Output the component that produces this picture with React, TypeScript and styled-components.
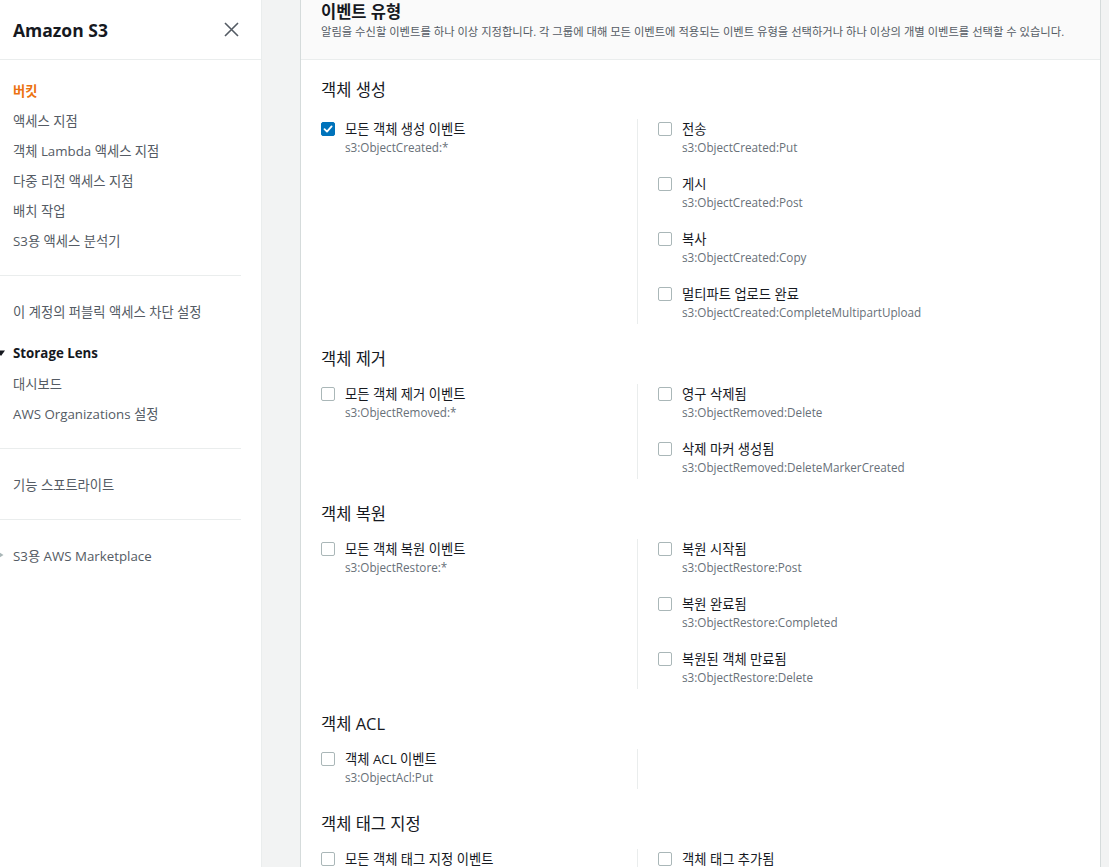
import React from 'react';
import styled, { createGlobalStyle } from 'styled-components';

const GlobalStyle = createGlobalStyle`
    html, body {
        margin: 0;
        padding: 0;
        height: 867px;
        overflow: hidden;
    }
    body {
        font-family: "Open Sans", "Noto Sans CJK KR", sans-serif;
        color: #16191f;
        background: #f2f3f3;
    }
`

const Layout = styled.div`
    display: flex;
    height: 867px;
`

const Sidebar = styled.nav`
    width: 261px;
    flex-shrink: 0;
    background: #ffffff;
    border-right: 1px solid #eaeded;
`

const SideHeader = styled.div`
    height: 59px;
    display: flex;
    align-items: center;
    justify-content: space-between;
    padding: 0 22px 0 13px;
    border-bottom: 1px solid #eaeded;
`

const SideTitle = styled.span`
    font-size: 17.5px;
    font-weight: 700;
    color: #16191f;
`

const NavList = styled.div`
    padding-top: 15px;
`

const NavGroup = styled.div<{ spaced?: boolean }>`
    margin-top: ${({ spaced }) => (spaced ? 12 : 0)}px;
`

const NavItem = styled.div<{ active?: boolean; bold?: boolean }>`
    display: flex;
    align-items: center;
    height: 30px;
    padding-left: 13px;
    font-size: 13.3px;
    color: ${({ active, bold }) => (active ? '#ec7211' : bold ? '#16191f' : '#545b64')};
    font-weight: ${({ active, bold }) => (active || bold ? 700 : 400)};
    white-space: nowrap;
`

const Caret = styled.svg`
    width: 8px;
    height: 8px;
    margin-left: -16px;
    margin-right: 8px;
    flex-shrink: 0;
`

const SideDivider = styled.hr`
    margin: 20px 20px 20px 0;
    border: 0;
    border-top: 1px solid #eaeded;
`

const Main = styled.main`
    flex: 1;
    padding: 0 8px 0 38px;
    min-width: 0;
`

const Panel = styled.section`
    height: 100%;
    background: #ffffff;
    border-left: 1px solid #d5dbdb;
    border-right: 1px solid #d5dbdb;
`

const PanelHeader = styled.header`
    background: #fafafa;
    padding: 1px 20px 19px;
    border-bottom: 1px solid #eaeded;
`

const PanelTitle = styled.h2`
    margin: 0;
    font-size: 16.5px;
    line-height: 22px;
    font-weight: 700;
    color: #16191f;
`

const PanelDesc = styled.p`
    margin: 1px 0 0;
    font-size: 11.3px;
    line-height: 16px;
    color: #545b64;
    white-space: nowrap;
`

const PanelBody = styled.div`
    padding: 19px 20px 0;
`

const GroupTitle = styled.h3`
    margin: 0;
    font-size: 16.5px;
    line-height: 22px;
    font-weight: 400;
    color: #16191f;
`

const Columns = styled.div<{ first?: boolean }>`
    display: grid;
    grid-template-columns: 317px 1fr;
    margin: ${({ first }) => (first ? 18 : 14)}px 0 24px;
`

const Column = styled.div<{ divided?: boolean }>`
    display: flex;
    flex-direction: column;
    gap: 19px;
    padding-bottom: 4px;
    padding-left: ${({ divided }) => (divided ? 0 : 20)}px;
    border-right: ${({ divided }) => (divided ? '1px solid #eaeded' : 'none')};
`

const Option = styled.label`
    display: flex;
    gap: 10px;
    align-items: flex-start;
`

const Box = styled.span<{ checked?: boolean }>`
    width: 14px;
    height: 14px;
    margin-top: 3px;
    box-sizing: border-box;
    flex-shrink: 0;
    border-radius: 2px;
    border: 1px solid ${({ checked }) => (checked ? '#0073bb' : '#aab7b8')};
    background: ${({ checked }) => (checked ? '#0073bb' : '#ffffff')};
    display: flex;
    align-items: center;
    justify-content: center;
`

const OptionText = styled.div`
    display: flex;
    flex-direction: column;
`

const OptionLabel = styled.span`
    font-size: 13.3px;
    line-height: 20px;
    color: #16191f;
    white-space: nowrap;
`

const OptionCode = styled.span`
    font-size: 11.7px;
    line-height: 16px;
    color: #687078;
    white-space: nowrap;
`

interface EventOption {
    label: string;
    code: string;
    checked?: boolean;
}

interface EventGroup {
    title: string;
    all: EventOption;
    items: EventOption[];
}

const groups: EventGroup[] = [
    {
        title: '객체 생성',
        all: { label: '모든 객체 생성 이벤트', code: 's3:ObjectCreated:*', checked: true },
        items: [
            { label: '전송', code: 's3:ObjectCreated:Put' },
            { label: '게시', code: 's3:ObjectCreated:Post' },
            { label: '복사', code: 's3:ObjectCreated:Copy' },
            { label: '멀티파트 업로드 완료', code: 's3:ObjectCreated:CompleteMultipartUpload' },
        ],
    },
    {
        title: '객체 제거',
        all: { label: '모든 객체 제거 이벤트', code: 's3:ObjectRemoved:*' },
        items: [
            { label: '영구 삭제됨', code: 's3:ObjectRemoved:Delete' },
            { label: '삭제 마커 생성됨', code: 's3:ObjectRemoved:DeleteMarkerCreated' },
        ],
    },
    {
        title: '객체 복원',
        all: { label: '모든 객체 복원 이벤트', code: 's3:ObjectRestore:*' },
        items: [
            { label: '복원 시작됨', code: 's3:ObjectRestore:Post' },
            { label: '복원 완료됨', code: 's3:ObjectRestore:Completed' },
            { label: '복원된 객체 만료됨', code: 's3:ObjectRestore:Delete' },
        ],
    },
    {
        title: '객체 ACL',
        all: { label: '객체 ACL 이벤트', code: 's3:ObjectAcl:Put' },
        items: [],
    },
    {
        title: '객체 태그 지정',
        all: { label: '모든 객체 태그 지정 이벤트', code: 's3:ObjectTagging:*' },
        items: [
            { label: '객체 태그 추가됨', code: 's3:ObjectTagging:Put' },
        ],
    },
]

const Check = () => (
    <svg width="10" height="10" viewBox="0 0 10 10">
        <path d="M1.5 5.2 L4 7.6 L8.6 2.4" fill="none" stroke="#ffffff" strokeWidth="1.8" strokeLinecap="round" strokeLinejoin="round" />
    </svg>
)

const OptionRow = ({ label, code, checked }: EventOption) => (
    <Option>
        <Box checked={checked}>{checked && <Check />}</Box>
        <OptionText>
            <OptionLabel>{label}</OptionLabel>
            <OptionCode>{code}</OptionCode>
        </OptionText>
    </Option>
)

const App = () => (
    <>
        <GlobalStyle />
        <Layout>
            <Sidebar>
                <SideHeader>
                    <SideTitle>Amazon S3</SideTitle>
                    <svg width="15" height="15" viewBox="0 0 15 15">
                        <path d="M1 1 L14 14 M14 1 L1 14" stroke="#545b64" strokeWidth="1.6" />
                    </svg>
                </SideHeader>
                <NavList>
                    <NavItem active>버킷</NavItem>
                    <NavItem>액세스 지점</NavItem>
                    <NavItem>객체 Lambda 액세스 지점</NavItem>
                    <NavItem>다중 리전 액세스 지점</NavItem>
                    <NavItem>배치 작업</NavItem>
                    <NavItem>S3용 액세스 분석기</NavItem>
                    <SideDivider />
                    <NavItem>이 계정의 퍼블릭 액세스 차단 설정</NavItem>
                    <NavGroup spaced>
                        <NavItem bold>
                            <Caret viewBox="0 0 8 8">
                                <path d="M0 1.5 H8 L4 7 Z" fill="#16191f" />
                            </Caret>
                            Storage Lens
                        </NavItem>
                        <NavItem>대시보드</NavItem>
                        <NavItem>AWS Organizations 설정</NavItem>
                    </NavGroup>
                    <SideDivider />
                    <NavItem>기능 스포트라이트</NavItem>
                    <SideDivider />
                    <NavItem>
                        <Caret viewBox="0 0 8 8">
                            <path d="M2 1 L6.5 4 L2 7 Z" fill="#aab7b8" />
                        </Caret>
                        S3용 AWS Marketplace
                    </NavItem>
                </NavList>
            </Sidebar>
            <Main>
                <Panel>
                    <PanelHeader>
                        <PanelTitle>이벤트 유형</PanelTitle>
                        <PanelDesc>
                            알림을 수신할 이벤트를 하나 이상 지정합니다. 각 그룹에 대해 모든 이벤트에 적용되는 이벤트 유형을 선택하거나 하나 이상의 개별 이벤트를 선택할 수 있습니다.
                        </PanelDesc>
                    </PanelHeader>
                    <PanelBody>
                        {groups.map((group, index) => (
                            <div key={group.title}>
                                <GroupTitle>{group.title}</GroupTitle>
                                <Columns first={index === 0}>
                                    <Column divided>
                                        <OptionRow {...group.all} />
                                    </Column>
                                    <Column>
                                        {group.items.map((item) => <OptionRow key={item.code} {...item} />)}
                                    </Column>
                                </Columns>
                            </div>
                        ))}
                    </PanelBody>
                </Panel>
            </Main>
        </Layout>
    </>
)

export default App;
